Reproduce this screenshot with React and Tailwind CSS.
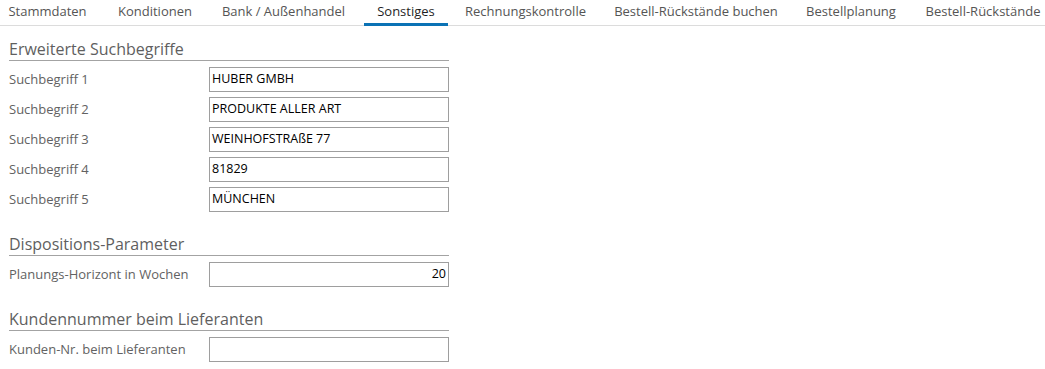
import React from 'react';

const tabs = [
  { label: 'Stammdaten', w: 'w-[102px] pr-[7px]' },
  { label: 'Konditionen', w: 'w-[106px]' },
  { label: 'Bank / Außenhandel', w: 'w-[151px]' },
  { label: 'Sonstiges', w: 'w-[94px]', active: true },
  { label: 'Rechnungskontrolle', w: 'w-[145px]' },
  { label: 'Bestell-Rückstände buchen', w: 'w-[196px]' },
  { label: 'Bestellplanung', w: 'w-[114px]' },
  { label: 'Bestell-Rückstände', w: 'w-[150px]' },
];

const suchbegriffe = [
  ['Suchbegriff 1', 'HUBER GMBH'],
  ['Suchbegriff 2', 'PRODUKTE ALLER ART'],
  ['Suchbegriff 3', 'WEINHOFSTRAßE 77'],
  ['Suchbegriff 4', '81829'],
  ['Suchbegriff 5', 'MÜNCHEN'],
];

// section title with the grey rule below
const Section = ({ title, first, children }) => (
  <div className={first ? 'mt-[10px]' : 'mt-[19px]'}>
    <div className="h-[25px] border-b border-[#a3a3a3] flex items-end pb-[3px] text-[16px] leading-none text-[#5f5f5f]">
      {title}
    </div>
    <div className="flex flex-col gap-[5px] mt-[6px]">{children}</div>
  </div>
);

const Field = ({ label, value, right }) => (
  <div className="flex items-center h-[25px]">
    <div className="w-[200px] text-[13px] text-[#626262]">{label}</div>
    <div
      className={`w-[240px] h-[25px] border border-[#9e9e9e] bg-white flex items-center px-[2px] text-[12.5px] text-black ${
        right ? 'justify-end' : ''
      }`}
    >
      {value}
    </div>
  </div>
);

export default function App() {
  return (
    <div className="w-[1045px] h-[369px] bg-white overflow-hidden font-['Open_Sans',sans-serif]">
      <div className="flex h-[26px] border-b border-[#dcdcdc]">
        {tabs.map((t) => (
          <div key={t.label} className={`${t.w} shrink-0 h-[26px] flex justify-center`}>
            <div
              className={`h-[26px] w-full mx-[5px] flex items-center justify-center border-b-[3px] whitespace-nowrap text-[13px] ${
                t.active ? 'border-[#0b72b5] text-[#1f1f1f]' : 'border-transparent text-[#555]'
              }`}
            >
              {t.label}
            </div>
          </div>
        ))}
      </div>

      <div className="w-[440px] ml-[9px]">
        <Section title="Erweiterte Suchbegriffe" first>
          {suchbegriffe.map(([l, v]) => (
            <Field key={l} label={l} value={v} />
          ))}
        </Section>
        <Section title="Dispositions-Parameter">
          <Field label="Planungs-Horizont in Wochen" value="20" right />
        </Section>
        <Section title="Kundennummer beim Lieferanten">
          <Field label="Kunden-Nr. beim Lieferanten" value="" />
        </Section>
      </div>
    </div>
  );
}
